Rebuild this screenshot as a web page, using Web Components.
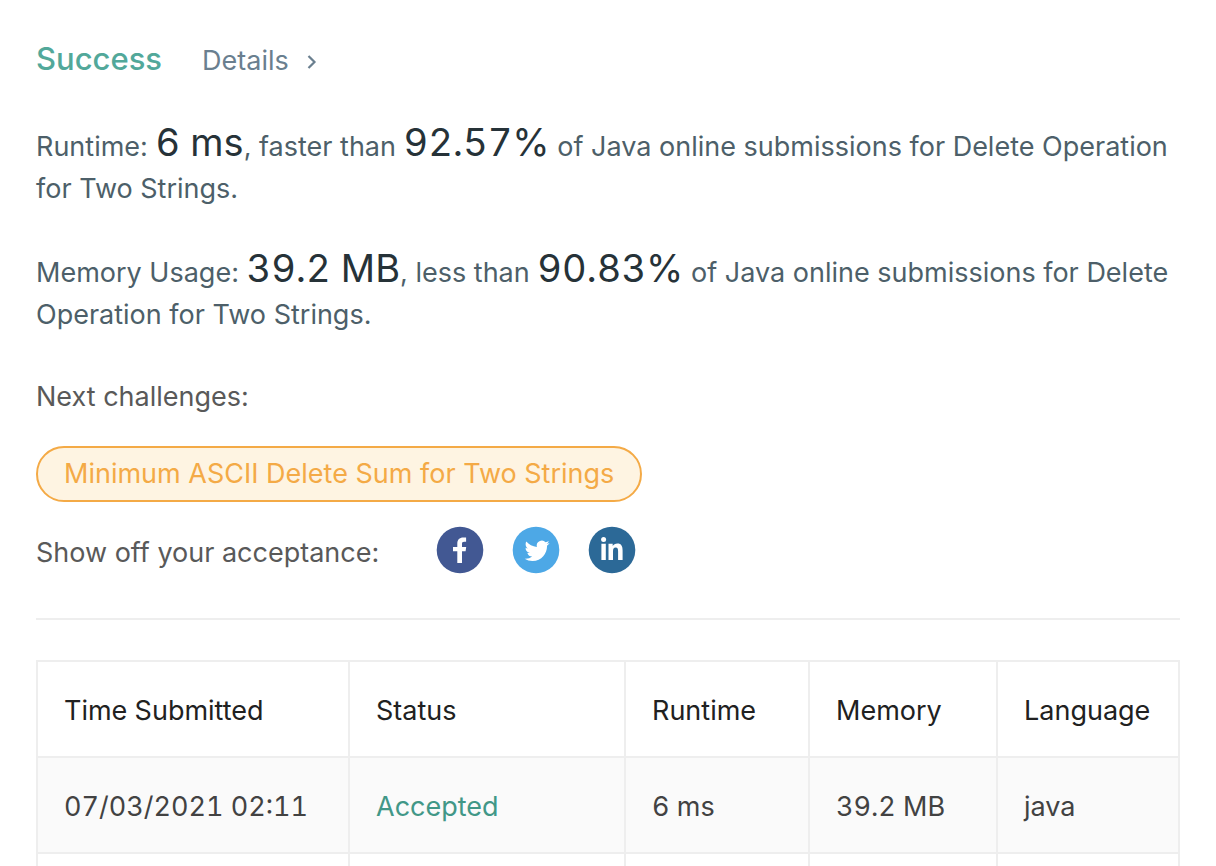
<!DOCTYPE html>
<html lang="en">
<head>
<meta charset="utf-8">
<meta name="viewport" content="width=device-width, initial-scale=1">
<title>Submission result</title>
<style>
  body { margin: 0; background: #fff; font-family: Inter, "Liberation Sans", sans-serif; font-size: 27px; line-height: 42px; color: #595959; }
</style>
</head>
<body>
<result-panel>
  <result-header slot="header" href="#details">Success</result-header>
  <result-stat>Runtime: <stat-value>6 ms</stat-value>, faster than <stat-value>92.57%</stat-value> of Java online submissions for Delete Operation for Two Strings.</result-stat>
  <result-stat>Memory Usage: <stat-value>39.2 MB</stat-value>, less than <stat-value>90.83%</stat-value> of Java online submissions for Delete Operation for Two Strings.</result-stat>
  <next-challenge slot="next" href="#next">Minimum ASCII Delete Sum for Two Strings</next-challenge>
  <share-bar slot="share">Show off your acceptance:</share-bar>
  <submission-table slot="history"></submission-table>
</result-panel>

<script>
function define(name, html, setup) {
  const template = document.createElement('template');
  template.innerHTML = html;
  customElements.define(name, class extends HTMLElement {
    constructor() {
      super();
      this.attachShadow({ mode: 'open' }).append(template.content.cloneNode(true));
    }
    connectedCallback() {
      if (setup) setup(this, this.shadowRoot);
    }
  });
}

const linkHref = (host, root) => {
  root.querySelector('a').href = host.getAttribute('href');
};

define('result-panel', `
  <style>
    :host { display: block; box-sizing: border-box; height: 100vh; overflow: hidden; padding: 38px 36px 0; }
    .stats { display: flex; flex-direction: column; gap: 42px; margin-top: 44px; }
    .history { margin-top: 44px; padding-top: 40px; border-top: 2px solid #eee; }
  </style>
  <main>
    <slot name="header"></slot>
    <div class="stats"><slot></slot></div>
    <slot name="next"></slot>
    <slot name="share"></slot>
    <div class="history"><slot name="history"></slot></div>
  </main>`);

define('result-header', `
  <style>
    :host { display: flex; align-items: baseline; gap: 40px; }
    h1 { margin: 0; font-size: 31px; line-height: 42px; font-weight: 500; color: #52a89a; }
    a { display: inline-flex; align-items: center; gap: 18px; color: #6a7f8f; text-decoration: none; }
    svg { width: 10px; height: 16px; }
  </style>
  <h1><slot></slot></h1>
  <a>Details
    <svg viewBox="0 0 10 16" fill="none" stroke="currentColor" stroke-width="2.2" aria-hidden="true"><path d="M1.5 3 7.5 9l-6 6"/></svg>
  </a>`, linkHref);

define('result-stat', `
  <style>:host { display: block; color: #4d5f69; }</style>
  <slot></slot>`);

define('stat-value', `
  <style>:host { display: inline; font-size: 38px; line-height: 32px; font-variant-numeric: tabular-nums; color: #263238; }</style>
  <slot></slot>`);

define('next-challenge', `
  <style>
    :host { display: block; margin-top: 40px; }
    h2 { margin: 0 0 28px; font-size: 27px; line-height: 42px; font-weight: 400; }
    a { display: inline-block; box-sizing: border-box; height: 56px; padding: 0 26px; border: 2px solid #f4aa46; border-radius: 28px; background: #fef4e2; color: #f4aa46; line-height: 52px; text-decoration: none; vertical-align: top; }
  </style>
  <h2>Next challenges:</h2>
  <a><slot></slot></a>`, linkHref);

define('share-bar', `
  <style>
    :host { display: flex; align-items: end; gap: 57px; margin-top: 24px; }
    nav { display: flex; gap: 28px; }
    a, svg { display: block; width: 48px; height: 48px; }
  </style>
  <span><slot></slot></span>
  <nav aria-label="Share">
    <a href="#facebook" aria-label="Facebook"><svg viewBox="0 0 48 48"><circle cx="24" cy="24" r="23.3" fill="#425893"/><path fill="#fff" d="M21.3 37v-11.7h-4.3v-4.3h4.3v-3.3c0-4 2.2-6.1 6-6.1h2.8v4.2h-2c-1.6 0-2.1.8-2.1 2.2v3h4.2l-.6 4.3h-3.6V37z"/></svg></a>
    <a href="#twitter" aria-label="Twitter"><svg viewBox="0 0 48 48"><circle cx="24" cy="24" r="23.3" fill="#4da8e6"/><path fill="#fff" transform="translate(12.6 12.3) scale(1.04)" d="M23.953 4.57a10 10 0 01-2.825.775 4.958 4.958 0 002.163-2.723c-.951.555-2.005.959-3.127 1.184a4.92 4.92 0 00-8.384 4.482C7.69 8.095 4.067 6.13 1.64 3.162a4.822 4.822 0 00-.666 2.475c0 1.71.87 3.213 2.188 4.096a4.904 4.904 0 01-2.228-.616v.06a4.923 4.923 0 003.946 4.827 4.996 4.996 0 01-2.212.085 4.936 4.936 0 004.604 3.417 9.867 9.867 0 01-6.102 2.105c-.39 0-.779-.023-1.17-.067a13.995 13.995 0 007.557 2.209c9.053 0 13.998-7.496 13.998-13.985 0-.21 0-.42-.015-.63A9.935 9.935 0 0024 4.59z"/></svg></a>
    <a href="#linkedin" aria-label="LinkedIn"><svg viewBox="0 0 48 48"><circle cx="24" cy="24" r="23.3" fill="#2c6997"/><g fill="#fff"><circle cx="15.6" cy="13.4" r="2.5"/><path d="M13.4 17.8h4.4V34h-4.4zM20.5 17.8h4.2V20c.9-1.6 2.5-2.6 4.7-2.6 4 0 5.2 2.7 5.2 7V34h-4.5v-8.6c0-2.3-.4-3.9-2.4-3.9-2.1 0-2.7 1.6-2.7 3.9V34h-4.5z"/></g></svg></a>
  </nav>`);

define('submission-table', `
  <style>
    :host { display: block; }
    table { width: 100%; table-layout: fixed; border-collapse: separate; border-spacing: 0; border: solid #eee; border-width: 2px 0 0 2px; font-variant-numeric: tabular-nums; }
    .time { width: 312px; } .status { width: 276px; } .runtime { width: 184px; } .memory { width: 188px; }
    th, td { box-sizing: border-box; height: 96px; padding: 4px 0 0 26px; border: solid #eee; border-width: 0 2px 2px 0; text-align: left; font-weight: 400; white-space: nowrap; }
    th { color: #212121; }
    td { color: #424242; }
    tbody tr:nth-child(odd) { background: #fafafa; }
    a { color: #419787; text-decoration: none; }
  </style>
  <table>
    <colgroup><col class="time"><col class="status"><col class="runtime"><col class="memory"><col></colgroup>
    <thead><tr><th scope="col">Time Submitted</th><th scope="col">Status</th><th scope="col">Runtime</th><th scope="col">Memory</th><th scope="col">Language</th></tr></thead>
    <tbody>
      <tr><td>07/03/2021 02:11</td><td><a href="#submission">Accepted</a></td><td>6 ms</td><td>39.2 MB</td><td>java</td></tr>
      <tr><td></td><td></td><td></td><td></td><td></td></tr>
    </tbody>
  </table>`);
</script>
</body>
</html>
